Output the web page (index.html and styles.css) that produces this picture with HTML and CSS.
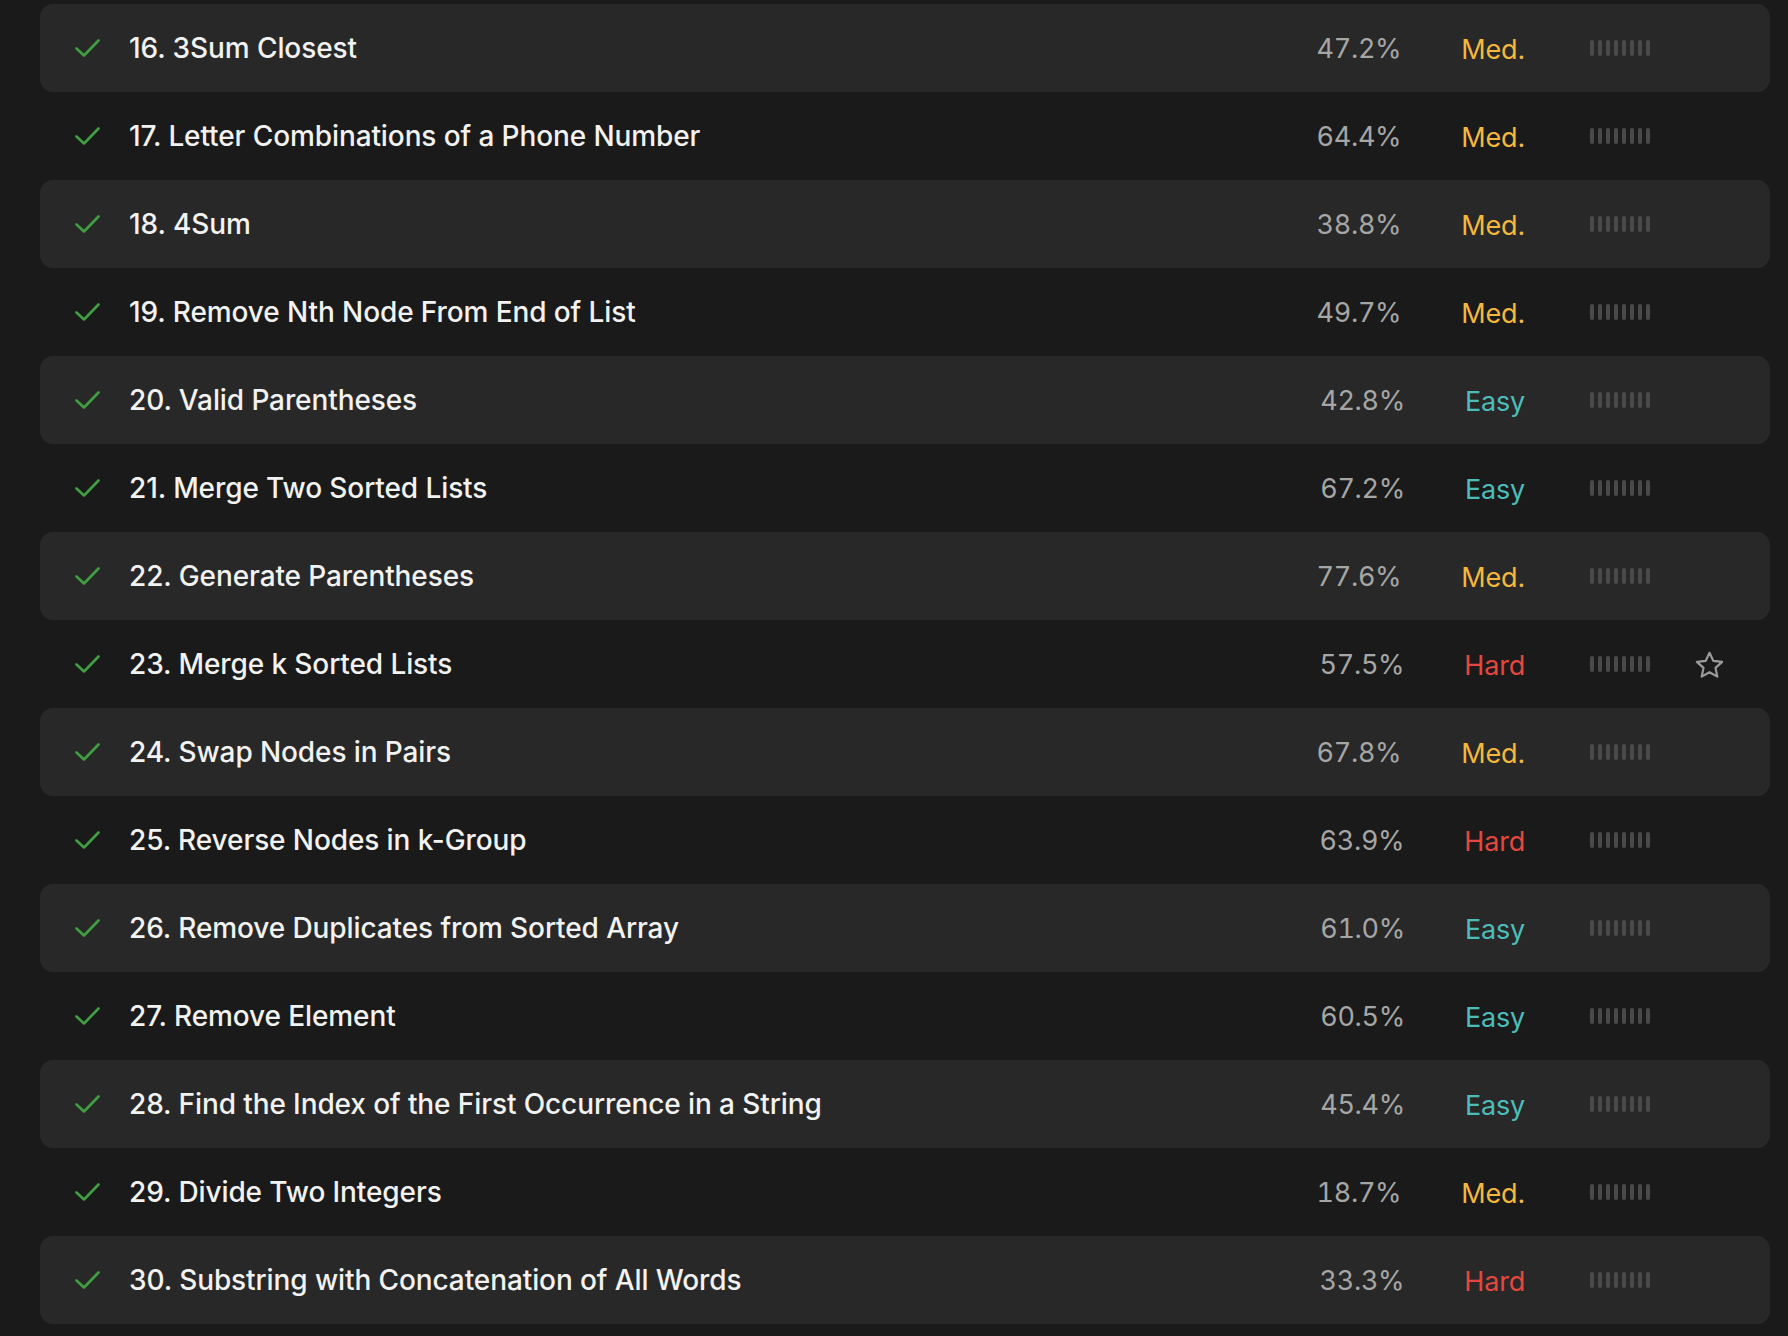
FILE: index.html
```html
<!DOCTYPE html>
<html lang="en">
<head>
<meta charset="utf-8">
<title>Problem list</title>
<link rel="stylesheet" href="styles.css">
</head>
<body>
<svg width="0" height="0" class="defs" aria-hidden="true">
  <defs>
    <symbol id="check" viewBox="0 0 25 18"><path d="M1.5 9.5 L9 16.5 L23.5 1.5" fill="none" stroke="currentColor" stroke-width="2.6" stroke-linecap="round" stroke-linejoin="round"/></symbol>
    <symbol id="star" viewBox="0 0 29 27"><path d="M14.5 1.8 L18.3 9.9 L27.1 10.9 L20.5 16.9 L22.3 25.6 L14.5 21.2 L6.7 25.6 L8.5 16.9 L1.9 10.9 L10.7 9.9 Z" fill="none" stroke="currentColor" stroke-width="2.2" stroke-linejoin="round"/></symbol>
  </defs>
</svg>
<div class="list">
  <div class="row striped"><svg class="check"><use href="#check"/></svg><span class="title">16. 3Sum Closest</span><span class="pct">47.2%</span><span class="diff med">Med.</span><span class="bars"><i></i><i></i><i></i><i></i><i></i><i></i><i></i><i></i></span><span class="fav"></span></div>
  <div class="row"><svg class="check"><use href="#check"/></svg><span class="title">17. Letter Combinations of a Phone Number</span><span class="pct">64.4%</span><span class="diff med">Med.</span><span class="bars"><i></i><i></i><i></i><i></i><i></i><i></i><i></i><i></i></span><span class="fav"></span></div>
  <div class="row striped"><svg class="check"><use href="#check"/></svg><span class="title">18. 4Sum</span><span class="pct">38.8%</span><span class="diff med">Med.</span><span class="bars"><i></i><i></i><i></i><i></i><i></i><i></i><i></i><i></i></span><span class="fav"></span></div>
  <div class="row"><svg class="check"><use href="#check"/></svg><span class="title">19. Remove Nth Node From End of List</span><span class="pct">49.7%</span><span class="diff med">Med.</span><span class="bars"><i></i><i></i><i></i><i></i><i></i><i></i><i></i><i></i></span><span class="fav"></span></div>
  <div class="row striped"><svg class="check"><use href="#check"/></svg><span class="title">20. Valid Parentheses</span><span class="pct">42.8%</span><span class="diff easy">Easy</span><span class="bars"><i></i><i></i><i></i><i></i><i></i><i></i><i></i><i></i></span><span class="fav"></span></div>
  <div class="row"><svg class="check"><use href="#check"/></svg><span class="title">21. Merge Two Sorted Lists</span><span class="pct">67.2%</span><span class="diff easy">Easy</span><span class="bars"><i></i><i></i><i></i><i></i><i></i><i></i><i></i><i></i></span><span class="fav"></span></div>
  <div class="row striped"><svg class="check"><use href="#check"/></svg><span class="title">22. Generate Parentheses</span><span class="pct">77.6%</span><span class="diff med">Med.</span><span class="bars"><i></i><i></i><i></i><i></i><i></i><i></i><i></i><i></i></span><span class="fav"></span></div>
  <div class="row"><svg class="check"><use href="#check"/></svg><span class="title">23. Merge k Sorted Lists</span><span class="pct">57.5%</span><span class="diff hard">Hard</span><span class="bars"><i></i><i></i><i></i><i></i><i></i><i></i><i></i><i></i></span><span class="fav"><svg class="star"><use href="#star"/></svg></span></div>
  <div class="row striped"><svg class="check"><use href="#check"/></svg><span class="title">24. Swap Nodes in Pairs</span><span class="pct">67.8%</span><span class="diff med">Med.</span><span class="bars"><i></i><i></i><i></i><i></i><i></i><i></i><i></i><i></i></span><span class="fav"></span></div>
  <div class="row"><svg class="check"><use href="#check"/></svg><span class="title">25. Reverse Nodes in k-Group</span><span class="pct">63.9%</span><span class="diff hard">Hard</span><span class="bars"><i></i><i></i><i></i><i></i><i></i><i></i><i></i><i></i></span><span class="fav"></span></div>
  <div class="row striped"><svg class="check"><use href="#check"/></svg><span class="title">26. Remove Duplicates from Sorted Array</span><span class="pct">61.0%</span><span class="diff easy">Easy</span><span class="bars"><i></i><i></i><i></i><i></i><i></i><i></i><i></i><i></i></span><span class="fav"></span></div>
  <div class="row"><svg class="check"><use href="#check"/></svg><span class="title">27. Remove Element</span><span class="pct">60.5%</span><span class="diff easy">Easy</span><span class="bars"><i></i><i></i><i></i><i></i><i></i><i></i><i></i><i></i></span><span class="fav"></span></div>
  <div class="row striped"><svg class="check"><use href="#check"/></svg><span class="title">28. Find the Index of the First Occurrence in a String</span><span class="pct">45.4%</span><span class="diff easy">Easy</span><span class="bars"><i></i><i></i><i></i><i></i><i></i><i></i><i></i><i></i></span><span class="fav"></span></div>
  <div class="row"><svg class="check"><use href="#check"/></svg><span class="title">29. Divide Two Integers</span><span class="pct">18.7%</span><span class="diff med">Med.</span><span class="bars"><i></i><i></i><i></i><i></i><i></i><i></i><i></i><i></i></span><span class="fav"></span></div>
  <div class="row striped"><svg class="check"><use href="#check"/></svg><span class="title">30. Substring with Concatenation of All Words</span><span class="pct">33.3%</span><span class="diff hard">Hard</span><span class="bars"><i></i><i></i><i></i><i></i><i></i><i></i><i></i><i></i></span><span class="fav"></span></div>
</div>
</body>
</html>
```
FILE: styles.css
```css
html, body {
  margin: 0;
  padding: 0;
  background: #1a1a1a;
}
body {
  font-family: "Inter", "Liberation Sans", sans-serif;
  color: #eff1f6;
}
.defs {
  position: absolute;
  width: 0;
  height: 0;
}
.list {
  padding: 4px 18px 0 40px;
  display: flex;
  flex-direction: column;
}
.row {
  display: flex;
  align-items: center;
  height: 88px;
  padding: 0 46px 0 35px;
  border-radius: 13px;
}
.row.striped {
  background: #282828;
}
.check {
  width: 25px;
  height: 18px;
  color: #3f9f42;
  flex: none;
  margin-right: 29px;
}
.title {
  flex: 1;
  font-size: 28px;
  font-weight: 500;
  letter-spacing: -0.1px;
  color: #f2f2f2;
  white-space: nowrap;
}
.pct {
  font-size: 27px;
  color: #a6a6a6;
  font-variant-numeric: tabular-nums;
  letter-spacing: -0.3px;
}
.diff {
  margin-left: 60px;
  font-size: 27px;
  letter-spacing: -0.2px;
  position: relative;
  top: 1px;
}
.diff.med { color: #f5b83a; }
.diff.easy { color: #4dbdbb; }
.diff.hard { color: #e5473e; }
.bars {
  margin-left: 65px;
  display: flex;
  gap: 4px;
  height: 16px;
}
.bars i {
  display: block;
  width: 4px;
  height: 16px;
  border-radius: 2px;
  background: #4a4a4a;
}
.fav {
  margin-left: 45px;
  width: 29px;
  height: 27px;
  display: flex;
}
.star {
  width: 29px;
  height: 27px;
  color: #9b9b9b;
}
```
